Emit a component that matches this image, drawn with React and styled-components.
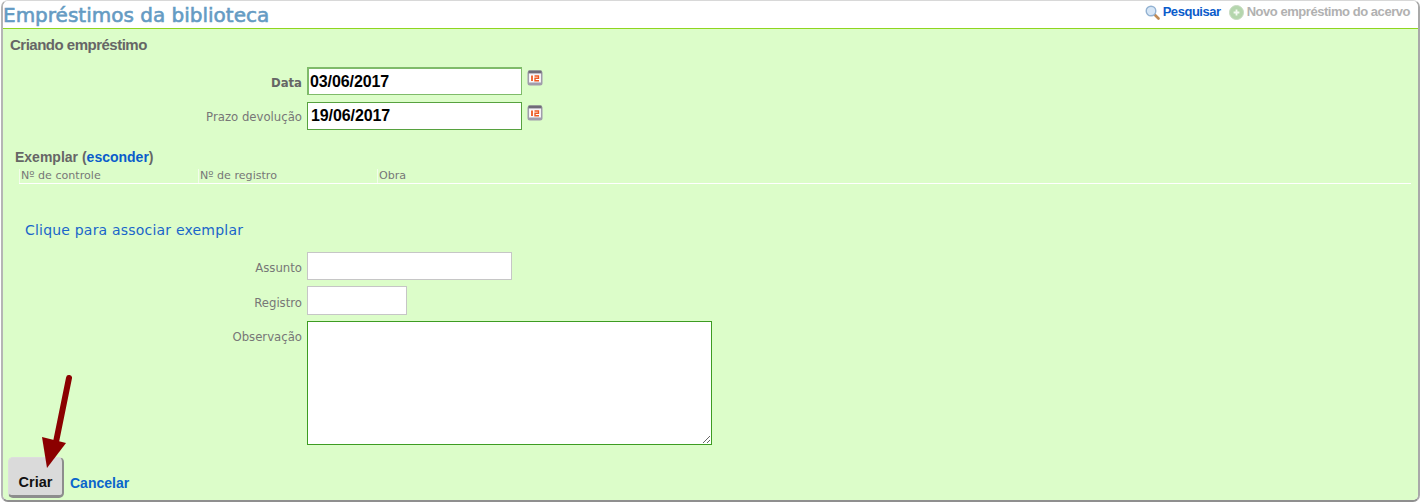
import styled, { createGlobalStyle } from "styled-components";

const GlobalStyle = createGlobalStyle`
  html, body {
    margin: 0;
    padding: 0;
    background: #ffffff;
  }
  body {
    font-family: "DejaVu Sans", sans-serif;
  }
`;

const Page = styled.div`
  position: relative;
  box-sizing: border-box;
  width: 1420px;
  height: 503px;
  padding-left: 1px;
  overflow: hidden;
`;

const Frame = styled.div`
  box-sizing: border-box;
  height: 502px;
  display: flex;
  flex-direction: column;
  border: 1px solid #d8d8d8;
  border-left: 2px solid #b5b5b5;
  border-right: 2px solid #a9a9a9;
  border-bottom: 2px solid #8f8f8f;
  border-radius: 7px;
  overflow: hidden;
`;

const Header = styled.header`
  display: flex;
  justify-content: space-between;
  height: 27px;
  flex: none;
  padding: 0 8px 0 0;
  background: #fff;
  border-bottom: 1px solid #8fd61f;
`;

const Title = styled.h1`
  margin: 0;
  font-size: 20px;
  line-height: 28px;
  font-weight: 400;
  -webkit-text-stroke: 0.6px #659bc3;
  color: #659bc3;
  white-space: nowrap;
`;

const TopLinks = styled.nav`
  display: flex;
  align-items: flex-start;
  gap: 8px;
  padding-top: 3px;
`;

const TopLink = styled.a`
  display: flex;
  align-items: center;
  gap: 3px;
  height: 16px;
  font: 700 13px/16px "Liberation Sans", sans-serif;
  letter-spacing: -0.46px;
  color: ${(p) => (p.$disabled ? "#b1b1b1" : "#0a5ccb")};
  white-space: nowrap;
`;

const Panel = styled.main`
  flex: 1;
  display: flex;
  flex-direction: column;
  background: #dcfdc9;
  padding: 8px 0 0 7px;
`;

const Heading = styled.h2`
  margin: 0;
  font: 700 15px/16px "Liberation Sans", sans-serif;
  letter-spacing: -0.5px;
  color: #666;
`;

const DateFields = styled.div`
  display: flex;
  flex-direction: column;
  gap: 7px;
  margin-top: 14px;
`;

const ExtraFields = styled.div`
  display: flex;
  flex-direction: column;
  gap: 6px;
  margin-top: 13px;
`;

const Row = styled.div`
  display: flex;
  align-items: flex-start;
`;

const Label = styled.label`
  box-sizing: border-box;
  width: 292px;
  margin-right: 5px;
  text-align: right;
  font-size: 11.7px;
  line-height: 16px;
  padding-top: ${(p) => p.$top || 7}px;
  font-weight: ${(p) => (p.$bold ? 700 : 400)};
  color: ${(p) => (p.$bold ? "#666" : "#777")};
`;

const DateInput = styled.input`
  box-sizing: border-box;
  width: 215px;
  height: 28px;
  padding: 0 2px;
  padding-left: ${(p) => (p.$focus ? "1px" : "3px")};
  border-style: solid;
  border-width: ${(p) => (p.$focus ? "2px 1px 1px 2px" : "1px")};
  border-color: ${(p) => (p.$focus ? "#7fbb6a" : "#57a13f")};
  background: #fff;
  font: 700 16px "Liberation Sans", sans-serif;
  letter-spacing: -0.1px;
  color: #000;
  outline: none;
`;

const CalendarButton = styled.span`
  display: block;
  margin: 3px 0 0 5px;
  width: 16px;
  height: 16px;
`;

const Section = styled.section`
  margin: 19px 0 0 5px;
`;

const SectionTitle = styled.h3`
  margin: 0;
  font: 700 14px/16px "Liberation Sans", sans-serif;
  color: #666;
`;

const SectionLink = styled.a`
  color: #0a5ccb;
`;

const ColumnsRow = styled.div`
  display: grid;
  grid-template-columns: 179px 179px 1fr;
  margin: 4px 7px 0 4px;
  height: 14px;
  border-bottom: 1px solid #fff;
`;

const Column = styled.div`
  padding-left: 1px;
  border-left: 1px solid #f2fdea;
  font-size: 11.1px;
  line-height: 14px;
  color: #777;
`;

const AssociateLink = styled.a`
  display: block;
  margin: 37px 0 0 10px;
  font-size: 14px;
  line-height: 18px;
  letter-spacing: 0.2px;
  color: #1a66c9;
`;

const TextField = styled.input`
  box-sizing: border-box;
  width: ${(p) => p.$width}px;
  height: ${(p) => p.$height}px;
  border: 1px solid #c6c6c6;
  background: #fff;
  outline: none;
`;

const NoteArea = styled.textarea`
  box-sizing: border-box;
  display: block;
  width: 405px;
  height: 124px;
  margin: 0;
  border: 1px solid #3d9c22;
  background: #fff;
  outline: none;
`;

const Actions = styled.div`
  display: flex;
  align-items: flex-end;
  gap: 6px;
  margin: 12px 0 0 -2px;
`;

const SubmitButton = styled.button`
  box-sizing: border-box;
  width: 56px;
  height: 41px;
  padding: 11px 0 0;
  border: 1px solid #ddd;
  border-right: 2px solid #8d8d8d;
  border-bottom: 3px solid #8d8d8d;
  border-radius: 5px;
  background: #dadada;
  font: 700 14.5px "Liberation Sans", sans-serif;
  color: #111;
`;

const CancelLink = styled.a`
  font: 700 14px/18px "Liberation Sans", sans-serif;
  color: #0a66cc;
  margin-bottom: 6px;
`;

const Arrow = styled.svg`
  position: absolute;
  left: 38px;
  top: 370px;
  width: 34px;
  height: 106px;
`;

function SearchIcon() {
  return (
    <svg width="15" height="15" viewBox="0 0 15 15">
      <path d="M9.5 9.5l4 4" stroke="#c08a55" strokeWidth="2.6" strokeLinecap="round" />
      <circle cx="6" cy="6" r="4.8" fill="#d6e6f6" stroke="#93b2d2" strokeWidth="1.4" />
    </svg>
  );
}

function PlusIcon() {
  return (
    <svg width="15" height="15" viewBox="0 0 15 15">
      <circle cx="7.5" cy="7.5" r="7" fill="#b5d6ad" stroke="#c6dac1" />
      <path d="M7.5 4.6v5.8M4.6 7.5h5.8" stroke="#f4faf2" strokeWidth="1.8" />
    </svg>
  );
}

function CalendarIcon() {
  return (
    <svg width="16" height="16" viewBox="0 0 16 16">
      <rect x="0.5" y="0.5" width="15" height="15" rx="2.5" fill="#a09cab" />
      <rect x="1.5" y="0.5" width="13" height="3" fill="#6f6b78" />
      <rect x="2" y="3.5" width="12" height="9" fill="#f3f1f5" />
      <rect x="3" y="5" width="10" height="6.5" fill="#fff" />
      <path d="M5 5.5v5.5" stroke="#ee5a22" strokeWidth="1.8" />
      <path d="M7.5 6h4v2.3H8v2.4h4" fill="none" stroke="#ee5a22" strokeWidth="1.4" />
    </svg>
  );
}

export default function App() {
  return (
    <Page>
      <GlobalStyle />
      <Frame>
        <Header>
          <Title>Empréstimos da biblioteca</Title>
          <TopLinks>
            <TopLink>
              <SearchIcon />
              Pesquisar
            </TopLink>
            <TopLink $disabled>
              <PlusIcon />
              Novo empréstimo do acervo
            </TopLink>
          </TopLinks>
        </Header>

        <Panel>
          <Heading>Criando empréstimo</Heading>

          <DateFields>
            <Row>
              <Label $bold $top={8}>Data</Label>
              <DateInput $focus defaultValue="03/06/2017" />
              <CalendarButton>
                <CalendarIcon />
              </CalendarButton>
            </Row>
            <Row>
              <Label>Prazo devolução</Label>
              <DateInput defaultValue="19/06/2017" />
              <CalendarButton>
                <CalendarIcon />
              </CalendarButton>
            </Row>
          </DateFields>

          <Section>
            <SectionTitle>
              Exemplar (<SectionLink>esconder</SectionLink>)
            </SectionTitle>
            <ColumnsRow>
              <Column>Nº de controle</Column>
              <Column>Nº de registro</Column>
              <Column>Obra</Column>
            </ColumnsRow>
            <AssociateLink>Clique para associar exemplar</AssociateLink>
          </Section>

          <ExtraFields>
            <Row>
              <Label $top={8}>Assunto</Label>
              <TextField $width={205} $height={28} />
            </Row>
            <Row>
              <Label $top={9}>Registro</Label>
              <TextField $width={100} $height={29} />
            </Row>
            <Row>
              <Label $top={8}>Observação</Label>
              <NoteArea />
            </Row>
          </ExtraFields>

          <Actions>
            <SubmitButton>Criar</SubmitButton>
            <CancelLink>Cancelar</CancelLink>
          </Actions>
        </Panel>
      </Frame>

      <Arrow viewBox="0 0 34 106">
        <path d="M31 8L18 72" stroke="#8b0000" strokeWidth="6" strokeLinecap="round" />
        <path d="M4 67L28 73L9 98Z" fill="#8b0000" />
      </Arrow>
    </Page>
  );
}
